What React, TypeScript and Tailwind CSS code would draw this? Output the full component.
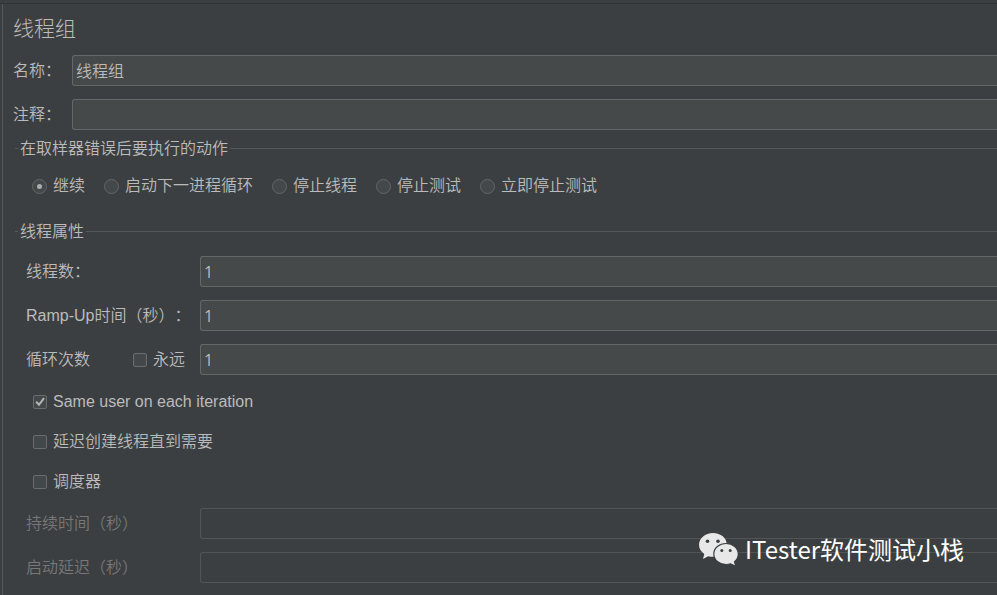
import { useState } from "react";
import type { ReactNode } from "react";

const errorActions = ["继续", "启动下一进程循环", "停止线程", "停止测试", "立即停止测试"];

const fieldClass =
  "h-[31px] min-w-0 flex-1 rounded-l-[3px] border border-r-0 border-[#646667] bg-[#45494a] text-[#bbbbbb] outline-none disabled:border-[#525455] disabled:bg-[#3c3f41]";

function Check({ id, label, checked = false }: { id: string; label: string; checked?: boolean }) {
  return (
    <label htmlFor={id} className="flex h-5 items-center gap-1.5">
      <span className="grid place-items-center">
        <input
          id={id}
          type="checkbox"
          defaultChecked={checked}
          className="peer col-start-1 row-start-1 size-3.5 appearance-none rounded-[2px] border border-[#6b6d6d] bg-[#43494a]"
        />
        <svg
          viewBox="0 0 14 14"
          className="pointer-events-none invisible col-start-1 row-start-1 size-3.5 peer-checked:visible"
          aria-hidden="true"
        >
          <path d="M3.200 6.800 6 9.800 11 3.200" fill="none" stroke="#b4b6b6" strokeWidth="2" />
        </svg>
      </span>
      {label}
    </label>
  );
}

function Section({ title, className, children }: { title: string; className: string; children: ReactNode }) {
  return (
    <fieldset className={`ml-3 border-t border-[#555758] ${className}`}>
      <legend className="ml-[3px] h-5 px-0.5 leading-[22px]">{title}</legend>
      {children}
    </fieldset>
  );
}

function Row({
  id,
  label,
  value = "",
  disabled = false,
  children,
}: {
  id: string;
  label: string;
  value?: string;
  disabled?: boolean;
  children?: ReactNode;
}) {
  return (
    <div className={`flex items-center ${disabled ? "text-[#777777]" : ""}`}>
      <div className="flex w-[174px] shrink-0 items-center justify-between pr-[15px]">
        <label htmlFor={id} className="whitespace-nowrap">
          {label}
        </label>
        {children}
      </div>
      <input
        id={id}
        type="text"
        defaultValue={value}
        disabled={disabled}
        className={`${fieldClass} px-[3px] font-['Open_Sans',sans-serif] font-normal`}
      />
    </div>
  );
}

function WeChatMark() {
  return (
    <svg width="42" height="36" viewBox="1 -1 42 36" aria-hidden="true">
      <path
        d="M15 1C7.3 1 1 6.2 1 12.8c0 3.8 2 7 5.300 9.200L5 27l5.200-2.800c1.500.4 3.100.6 4.800.6 7.700 0 13.800-5.200 13.800-12S22.700 1 15 1Z"
        fill="#e8e8e8"
      />
      <path
        d="M28 11.500c-6.800 0-12.200 4.700-12.200 10.500S21.200 32.500 28 32.500c1.600 0 3.100-.2 4.500-.7l5.300 2.500-1.300-4.500c2.400-1.900 3.800-4.700 3.800-7.800 0-5.800-5.500-10.500-12.300-10.500Z"
        fill="#e8e8e8"
        stroke="#3c3f41"
        strokeWidth="1.200"
      />
      <circle cx="9.500" cy="9.300" r="1.800" fill="#3c3f41" />
      <circle cx="20" cy="9.300" r="1.800" fill="#3c3f41" />
      <circle cx="23.800" cy="18.500" r="1.500" fill="#3c3f41" />
      <circle cx="32.200" cy="18.500" r="1.500" fill="#3c3f41" />
    </svg>
  );
}

export default function App() {
  const [action, setAction] = useState(errorActions[0]);

  return (
    <div className="relative min-h-screen overflow-hidden bg-[#3c3f41] pt-[3px] font-['Liberation_Sans','Noto_Sans_CJK_SC',sans-serif] text-base leading-5 font-[350] text-[#bbbbbb] [text-spacing-trim:space-all]">
      <main className="border-t border-[#313436]">
        <form className="ml-0.5 min-h-[calc(100vh-4px)] border-l border-[#555758] pt-2.5 pb-3">
          <div className="ml-2.5 flex flex-col gap-[13px]">
            <h1 className="h-7 text-[21px] leading-[30px] font-light">线程组</h1>
            <div className="flex items-center">
              <label htmlFor="name" className="w-[59px] shrink-0 whitespace-nowrap">
                名称：
              </label>
              <input id="name" type="text" defaultValue="线程组" className={`${fieldClass} px-[3px] pb-0.5`} />
            </div>
            <div className="flex items-center">
              <label htmlFor="comment" className="w-[59px] shrink-0 whitespace-nowrap">
                注释：
              </label>
              <input id="comment" type="text" className={`${fieldClass} px-[3px] pb-0.5`} />
            </div>
          </div>

          <Section title="在取样器错误后要执行的动作" className="mt-2">
            <div className="flex flex-wrap gap-x-[19px] pt-[18px] pl-[17px]">
              {errorActions.map((name) => (
                <label key={name} className="flex h-5 items-center gap-1.5">
                  <span className="grid place-items-center">
                    <input
                      type="radio"
                      name="on-error"
                      checked={action === name}
                      onChange={() => setAction(name)}
                      className="peer col-start-1 row-start-1 size-[15px] appearance-none rounded-full border border-[#636566] bg-[#43494a]"
                    />
                    <span className="pointer-events-none invisible col-start-1 row-start-1 size-[5px] rounded-full bg-[#acaeae] peer-checked:visible" />
                  </span>
                  {name}
                </label>
              ))}
            </div>
          </Section>

          <Section title="线程属性" className="mt-[25px]">
            <div className="flex flex-col gap-[13px] pt-[15px] pl-[11px]">
              <Row id="threads" label="线程数：" value="1" />
              <Row id="ramp-up" label="Ramp-Up时间（秒）：" value="1" />
              <Row id="loops" label="循环次数" value="1">
                <Check id="forever" label="永远" />
              </Row>
            </div>
            <div className="flex flex-col items-start gap-5 pt-[17px] pl-[18px]">
              <Check id="same-user" label="Same user on each iteration" checked />
              <Check id="delay-start" label="延迟创建线程直到需要" />
              <Check id="scheduler" label="调度器" />
            </div>
            <div className="flex flex-col gap-[13px] pt-4 pl-[11px]">
              <Row id="duration" label="持续时间（秒）" disabled />
              <Row id="delay" label="启动延迟（秒）" disabled />
            </div>
          </Section>
        </form>
      </main>

      <div className="pointer-events-none absolute right-[33px] bottom-7 flex items-center gap-1 font-['Noto_Sans_CJK_SC',sans-serif] text-2xl leading-9 font-normal text-white">
        <WeChatMark />
        <span>ITester软件测试小栈</span>
      </div>
    </div>
  );
}
